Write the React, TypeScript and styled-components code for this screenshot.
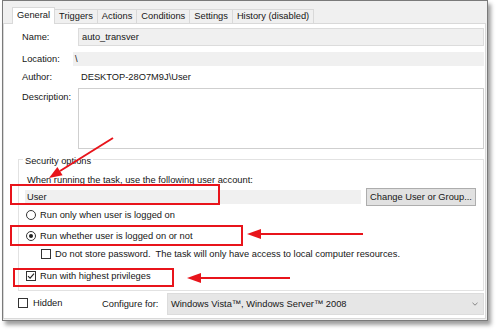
import React from "react";
import styled, { createGlobalStyle } from "styled-components";

const Global = createGlobalStyle`
  html, body { margin: 0; padding: 0; background: #ffffff; }
  body {
    font-family: "Liberation Sans", Arial, sans-serif;
    font-size: 9.3px;
    color: #161616;
  }
  * { box-sizing: border-box; }
`;

const Stage = styled.div`
  position: relative;
  width: 500px;
  height: 332px;
  padding-left: 2px;
`;

const Window = styled.div`
  width: 486px;
  height: 321px;
  border: 1px solid #7a7a7a;
  background: #f0f0f0;
  box-shadow: 3px 4px 4px rgba(0, 0, 0, 0.38);
  display: flex;
  flex-direction: column;
  padding-top: 6px;
`;

const TabStrip = styled.div`
  display: flex;
  align-items: flex-end;
  height: 16px;
  padding-left: 10px;
`;

const Tab = styled.div<{ $active?: boolean }>`
  position: relative;
  height: ${(p) => (p.$active ? "17px" : "14px")};
  margin-bottom: ${(p) => (p.$active ? "-1px" : "0")};
  margin-left: -1px;
  padding: 0 4px;
  border: 1px solid #d9d9d9;
  border-bottom: none;
  background: ${(p) => (p.$active ? "#ffffff" : "#f0f0f0")};
  z-index: ${(p) => (p.$active ? 2 : 1)};
  line-height: ${(p) => (p.$active ? "14px" : "12px")};
  white-space: nowrap;
`;

const Page = styled.div`
  flex: 1;
  background: #ffffff;
  border: 1px solid #d9d9d9;
  margin: 0 1px 1px 0;
  padding: 4px 1px 2px 14px;
  display: flex;
  flex-direction: column;
`;

const FormRow = styled.div<{ $h: number; $gap: number; $top?: boolean }>`
  display: grid;
  grid-template-columns: 60px 1fr;
  align-items: ${(p) => (p.$top ? "start" : "center")};
  height: ${(p) => p.$h}px;
  margin-top: ${(p) => p.$gap}px;
`;

const Label = styled.div<{ $pt?: number }>`
  padding-left: 4px;
  padding-top: ${(p) => p.$pt ?? 0}px;
  line-height: 12px;
`;

const TextField = styled.div`
  height: 18px;
  background: #f0f0f0;
  border: 1px solid #dcdcdc;
  padding-left: 3px;
  line-height: 16px;
`;

const ReadBand = styled.div<{ $shift: number }>`
  height: 14px;
  margin-left: ${(p) => p.$shift}px;
  background: #f0f0f0;
  padding-left: 2px;
  line-height: 14px;
`;

const Value = styled.div`
  padding-left: 3px;
  line-height: 12px;
`;

const TextArea = styled.div`
  height: 61px;
  background: #ffffff;
  border: 1px solid #cfcfcf;
`;

const Group = styled.fieldset`
  margin: 0;
  margin-top: 2px;
  border: 1px solid #e2e2e2;
  padding: 0 0 7px 8px;
  display: flex;
  flex-direction: column;
`;

const Legend = styled.legend`
  padding: 4px 2px 0 2px;
  margin-left: -4px;
  line-height: 12px;
`;

const Line = styled.div<{ $gap: number }>`
  margin-top: ${(p) => p.$gap}px;
  line-height: 12px;
`;

const AccountRow = styled.div`
  display: flex;
  align-items: center;
  height: 18px;
  margin-top: 2px;
  gap: 5px;
`;

const AccountBand = styled.div`
  width: 336px;
  height: 14px;
  margin-left: -2px;
  background: #f0f0f0;
  padding-left: 2px;
  line-height: 14px;
`;

const Button = styled.div`
  width: 110px;
  height: 18px;
  background: #e1e1e1;
  border: 1px solid #adadad;
  text-align: center;
  line-height: 16px;
`;

const Option = styled.div<{ $gap: number; $indent?: number }>`
  display: flex;
  align-items: center;
  gap: 4px;
  height: 14px;
  margin-top: ${(p) => p.$gap}px;
  margin-left: ${(p) => p.$indent ?? -1}px;
  white-space: nowrap;
`;

const Radio = styled.span<{ $on?: boolean }>`
  display: inline-flex;
  align-items: center;
  justify-content: center;
  width: 10px;
  height: 10px;
  border: 1px solid #333333;
  border-radius: 50%;
  background: #ffffff;
  &::after {
    content: "";
    display: ${(p) => (p.$on ? "block" : "none")};
    width: 4px;
    height: 4px;
    border-radius: 50%;
    background: #222222;
  }
`;

const Check = styled.span`
  display: inline-flex;
  align-items: center;
  justify-content: center;
  width: 10px;
  height: 10px;
  border: 1px solid #333333;
  background: #ffffff;
  flex: none;
`;

const BottomRow = styled.div`
  display: flex;
  align-items: center;
  height: 22px;
  margin-top: 2px;
`;

const HiddenOpt = styled.div`
  display: flex;
  align-items: center;
  gap: 5px;
  width: 84px;
  margin-top: -2px;
`;

const ConfigLabel = styled.div`
  width: 65px;
`;

const Combo = styled.div`
  flex: 1;
  height: 22px;
  display: flex;
  align-items: center;
  justify-content: space-between;
  background: #e6e6e6;
  border: 1px solid #dcdcdc;
  padding: 0 5px 0 3px;
`;

const Overlay = styled.svg`
  position: absolute;
  left: 0;
  top: 0;
  width: 500px;
  height: 332px;
  pointer-events: none;
`;

const Mark = styled.div<{ $x: number; $y: number; $w: number; $h: number }>`
  position: absolute;
  left: ${(p) => p.$x}px;
  top: ${(p) => p.$y}px;
  width: ${(p) => p.$w}px;
  height: ${(p) => p.$h}px;
  border: 2px solid #e8141b;
  pointer-events: none;
`;

const CheckMark = () => (
  <svg width="8" height="8" viewBox="0 0 8 8">
    <path d="M1 4.2 L3.1 6.2 L7 1.6" fill="none" stroke="#222" strokeWidth="1.1" />
  </svg>
);

const Chevron = () => (
  <svg width="6" height="4" viewBox="0 0 6 4">
    <path d="M0.5 0.8 L3 3.2 L5.5 0.8" fill="none" stroke="#7a7a7a" strokeWidth="0.9" />
  </svg>
);

const tabs = ["General", "Triggers", "Actions", "Conditions", "Settings", "History (disabled)"];

export default function App() {
  return (
    <>
      <Global />
      <Stage>
        <Window>
          <TabStrip>
            {tabs.map((t, i) => (
              <Tab key={t} $active={i === 0}>
                {t}
              </Tab>
            ))}
          </TabStrip>
          <Page>
            <FormRow $h={18} $gap={0}>
              <Label>Name:</Label>
              <TextField>auto_transver</TextField>
            </FormRow>
            <FormRow $h={14} $gap={6}>
              <Label>Location:</Label>
              <ReadBand $shift={-5}>\</ReadBand>
            </FormRow>
            <FormRow $h={12} $gap={5}>
              <Label>Author:</Label>
              <Value>DESKTOP-28O7M9J\User</Value>
            </FormRow>
            <FormRow $h={61} $gap={5} $top>
              <Label $pt={3}>Description:</Label>
              <TextArea />
            </FormRow>
            <Group>
              <Legend>Security options</Legend>
              <Line $gap={7}>When running the task, use the following user account:</Line>
              <AccountRow>
                <AccountBand>User</AccountBand>
                <Button>Change User or Group...</Button>
              </AccountRow>
              <Option $gap={2}>
                <Radio />
                Run only when user is logged on
              </Option>
              <Option $gap={7}>
                <Radio $on />
                Run whether user is logged on or not
              </Option>
              <Option $gap={4} $indent={14}>
                <Check />
                Do not store password.&nbsp; The task will only have access to local computer resources.
              </Option>
              <Option $gap={8}>
                <Check>
                  <CheckMark />
                </Check>
                Run with highest privileges
              </Option>
            </Group>
            <BottomRow>
              <HiddenOpt>
                <Check />
                Hidden
              </HiddenOpt>
              <ConfigLabel>Configure for:</ConfigLabel>
              <Combo>
                <span>Windows Vista™, Windows Server™ 2008</span>
                <Chevron />
              </Combo>
            </BottomRow>
          </Page>
        </Window>

        <Mark $x={10} $y={184} $w={210} $h={21} />
        <Mark $x={10} $y={225} $w={233} $h={21} />
        <Mark $x={13} $y={268} $w={161} $h={19} />

        <Overlay viewBox="0 0 500 332">
          <g stroke="#e8141b" strokeWidth="2" fill="none">
            <line x1="113" y1="138" x2="60" y2="171" />
            <line x1="363" y1="234" x2="260" y2="234" />
            <line x1="290" y1="278" x2="200" y2="278" />
          </g>
          <g fill="#e8141b">
            <polygon points="49,178 62.6,175.3 57.4,166.9" />
            <polygon points="247,234 261,229 261,239" />
            <polygon points="187,278 201,273 201,283" />
          </g>
        </Overlay>
      </Stage>
    </>
  );
}
